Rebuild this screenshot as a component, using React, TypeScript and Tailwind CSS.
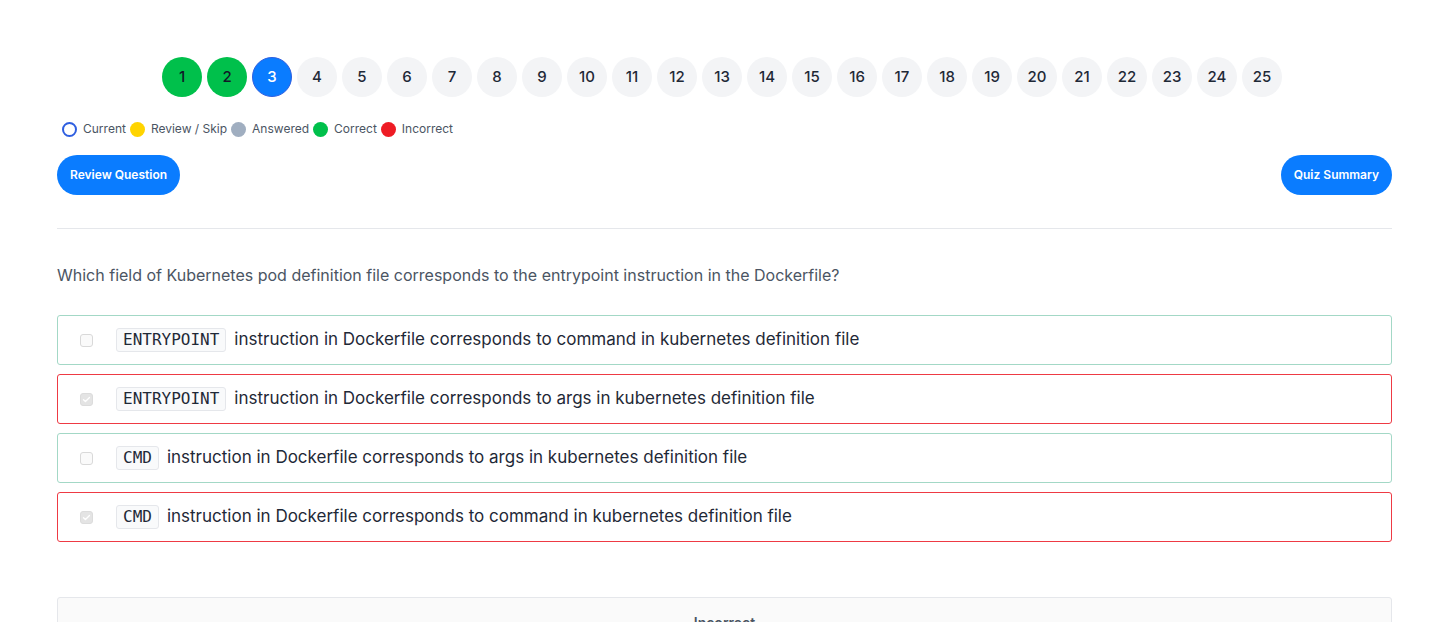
import React from 'react';

const font = { fontFamily: 'Inter, "Noto Sans", sans-serif' };

const options = [
  { code: 'ENTRYPOINT', text: 'instruction in Dockerfile corresponds to command in kubernetes definition file', checked: false, wrong: false },
  { code: 'ENTRYPOINT', text: 'instruction in Dockerfile corresponds to args in kubernetes definition file', checked: true, wrong: true },
  { code: 'CMD', text: 'instruction in Dockerfile corresponds to args in kubernetes definition file', checked: false, wrong: false },
  { code: 'CMD', text: 'instruction in Dockerfile corresponds to command in kubernetes definition file', checked: true, wrong: true },
];

const Step = ({ n }: { n: number }) => {
  // colour depends on status: 1-2 correct, 3 current, rest unanswered
  let cls = 'bg-[#f3f4f6] text-[#1f2937]';
  if (n <= 2) cls = 'bg-[#00c04b] text-[#111827]';
  if (n === 3) cls = 'bg-[#0a7cff] text-white border border-[#2f5fe0]';
  return (
    <div className={`w-10 h-10 rounded-full flex items-center justify-center text-[15px] font-medium ${cls}`}>
      {n}
    </div>
  );
};

const Checkbox = ({ checked }: { checked: boolean }) => (
  <div
    className={`w-[13px] h-[13px] rounded-[3px] flex items-center justify-center ${
      checked ? 'bg-[#e4e4e4] border border-[#dcdcdc]' : 'bg-[#fafafa] border border-[#d9d9d9]'
    }`}
  >
    {checked && (
      <svg viewBox="0 0 12 12" className="w-[9px] h-[9px]">
        <path d="M2 6.3l2.6 2.5L10 3.4" stroke="#ffffff" strokeWidth="1.8" fill="none" strokeLinecap="round" strokeLinejoin="round" />
      </svg>
    )}
  </div>
);

export default function App() {
  return (
    <div className="h-[622px] overflow-hidden bg-white pl-[57px] pr-[45px] pt-[57px]" style={font}>
      {/* Question navigator */}
      <div className="flex justify-center gap-[5px] pr-[5px]">
        {Array.from({ length: 25 }, (_, i) => (
          <Step key={i} n={i + 1} />
        ))}
      </div>

      {/* Legend */}
      <div className="flex items-center mt-[23px] pl-[5px] text-[12px] text-[#4b5563]">
        <span className="w-[15px] h-[15px] rounded-full border-2 border-[#2f5fe0] mr-[6px]" />
        <span className="mr-[4px]">Current</span>
        <span className="w-[15px] h-[15px] rounded-full bg-[#ffd400] mr-[6px]" />
        <span className="mr-[4px]">Review / Skip</span>
        <span className="w-[15px] h-[15px] rounded-full bg-[#a0aec0] mr-[6px]" />
        <span className="mr-[4px]">Answered</span>
        <span className="w-[15px] h-[15px] rounded-full bg-[#00c04b] mr-[6px]" />
        <span className="mr-[4px]">Correct</span>
        <span className="w-[15px] h-[15px] rounded-full bg-[#ee1c24] mr-[6px]" />
        <span>Incorrect</span>
      </div>

      {/* Actions */}
      <div className="flex justify-between mt-[17px]">
        <button className="h-10 px-[13px] rounded-full bg-[#0a7cff] text-white text-[12px] font-semibold">
          Review Question
        </button>
        <button className="h-10 px-[13px] rounded-full bg-[#0a7cff] text-white text-[12px] font-semibold">
          Quiz Summary
        </button>
      </div>

      <div className="border-t border-[#e5e7eb] mt-[33px]" />

      {/* Question */}
      <p className="mt-[34px] text-[16px] text-[#4b5563]">
        Which field of Kubernetes pod definition file corresponds to the entrypoint instruction in the Dockerfile?
      </p>

      <div className="mt-[28px] flex flex-col gap-[9px]">
        {options.map((o, i) => (
          <div
            key={i}
            className={`h-[50px] rounded-[3px] border flex items-center pl-[22px] ${
              o.wrong ? 'border-[#ee3a44]' : 'border-[#a3d8c6]'
            }`}
          >
            <Checkbox checked={o.checked} />
            <span
              className="ml-[23px] px-[6px] h-[24px] flex items-center rounded-[3px] border border-[#e5e7eb] bg-[#f9fafb] text-[16px] text-[#1f2937]"
              style={{ fontFamily: '"DejaVu Sans Mono", "Liberation Mono", monospace' }}
            >
              {o.code}
            </span>
            <span className="ml-[8px] text-[17px] text-[#1f2937]">{o.text}</span>
          </div>
        ))}
      </div>

      {/* Result */}
      <div className="mt-[55px] rounded-t-[3px] border border-[#e5e7eb] bg-[#fafafa] h-[80px] flex justify-center pt-[14px]">
        <span className="text-[14px] font-semibold text-[#4b5563]">Incorrect</span>
      </div>
    </div>
  );
}
